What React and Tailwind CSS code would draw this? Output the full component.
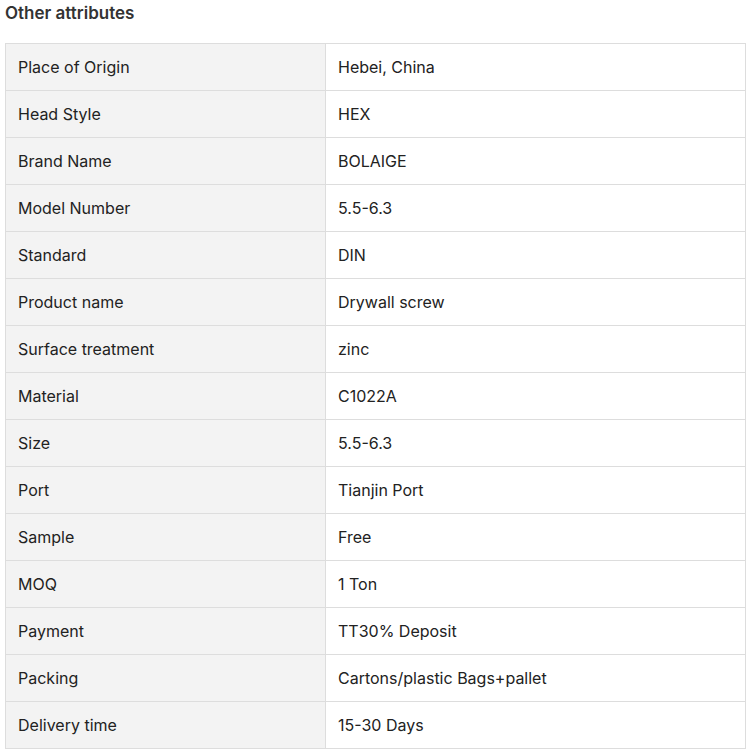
const attributes = [
  ["Place of Origin", "Hebei, China"],
  ["Head Style", "HEX"],
  ["Brand Name", "BOLAIGE"],
  ["Model Number", "5.5-6.3"],
  ["Standard", "DIN"],
  ["Product name", "Drywall screw"],
  ["Surface treatment", "zinc"],
  ["Material", "C1022A"],
  ["Size", "5.5-6.3"],
  ["Port", "Tianjin Port"],
  ["Sample", "Free"],
  ["MOQ", "1 Ton"],
  ["Payment", "TT30% Deposit"],
  ["Packing", "Cartons/plastic Bags+pallet"],
  ["Delivery time", "15-30 Days"],
];

export default function App() {
  return (
    <div className="bg-white px-[5px] font-['Inter',sans-serif] text-[#222]">
      <h2 className="pt-[3px] pb-[19px] text-[17px] font-semibold leading-[21px] text-[#333]">Other attributes</h2>
      <table className="w-[741px] border-collapse text-[16px]">
        <tbody>
          {attributes.map(([name, value]) => (
            <tr key={name} className="h-[47px]">
              <td className="w-[320px] border border-[#dddddd] bg-[#f3f3f3] px-3 align-middle">{name}</td>
              <td className="border border-[#dddddd] px-3 align-middle">{value}</td>
            </tr>
          ))}
        </tbody>
      </table>
    </div>
  );
}
